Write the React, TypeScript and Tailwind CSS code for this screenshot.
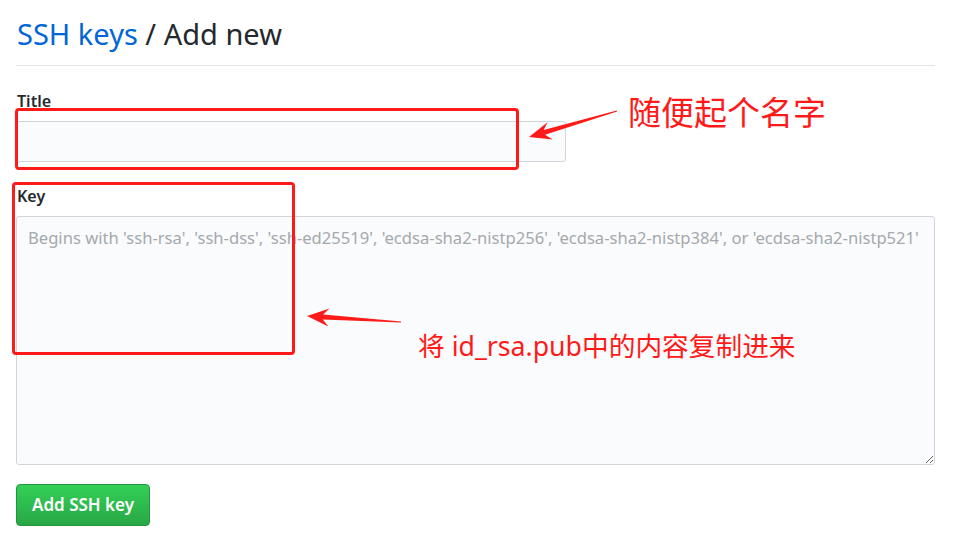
import React from 'react';

const sans = "font-['Segoe_UI','Noto_Sans','Noto_Sans_CJK_SC',sans-serif]";

function Arrow({ x1, y1, x2, y2 }: { x1: number; y1: number; x2: number; y2: number }) {
  // arrow drawn from tail (x1,y1) to head (x2,y2)
  const dx = x2 - x1;
  const dy = y2 - y1;
  const len = Math.sqrt(dx * dx + dy * dy);
  const ux = dx / len;
  const uy = dy / len;
  const px = -uy;
  const py = ux;
  const headLen = 22;
  const headW = 9;
  const bx = x2 - ux * headLen;
  const by = y2 - uy * headLen;
  const nx = x2 - ux * (headLen - 6);
  const ny = y2 - uy * (headLen - 6);
  const pts = [
    [x1 + px * 0.6, y1 + py * 0.6],
    [nx + px * 2.5, ny + py * 2.5],
    [bx + px * headW, by + py * headW],
    [x2, y2],
    [bx - px * headW, by - py * headW],
    [nx - px * 2.5, ny - py * 2.5],
    [x1 - px * 0.6, y1 - py * 0.6],
  ]
    .map((p) => p.join(','))
    .join(' ');
  return <polygon points={pts} fill="#ff1a1a" />;
}

export default function App() {
  return (
    <div className={`relative w-[969px] h-[553px] bg-white overflow-hidden ${sans}`}>
      <div className="flex flex-col items-start pl-4 pr-[34px] pt-[14px]">
        <h2 className="self-stretch text-[29px] leading-[40px] text-[#24292e] pb-[11px] border-b border-[#e1e4e8] pl-[1px]">
          <span className="text-[#0366d6]">SSH keys</span> / Add new
        </h2>

        <div className="flex flex-col gap-2 mt-[23px]">
          <label className="text-[16px] font-semibold text-[#24292e] leading-[24px] pl-[1px]">Title</label>
          <input
            type="text"
            className="w-[550px] h-[41px] bg-[#fafbfc] border border-[#d1d5da] rounded-[3px] outline-none"
          />
        </div>

        <div className="flex flex-col gap-2 mt-[22px] self-stretch">
          <label className="text-[16px] font-semibold text-[#24292e] leading-[24px] pl-[1px]">Key</label>
          <textarea
            placeholder="Begins with 'ssh-rsa', 'ssh-dss', 'ssh-ed25519', 'ecdsa-sha2-nistp256', 'ecdsa-sha2-nistp384', or 'ecdsa-sha2-nistp521'"
            className="w-[919px] h-[249px] bg-[#fafbfc] border border-[#d1d5da] rounded-[3px] px-[11px] py-[9px] text-[16.6px] leading-[24px] placeholder:text-[#a4a9ae] outline-none"
          />
        </div>

        <button className="mt-[19px] h-[42px] px-[15px] rounded-[4px] border border-[#22943d] bg-gradient-to-b from-[#34d058] to-[#28a745] text-white text-[17px] font-semibold">
          Add SSH key
        </button>
      </div>

      {/* red annotations */}
      <div className="absolute left-[15px] top-[108px] w-[504px] h-[62px] border-[3px] border-[#ff1a1a] rounded-[4px]" />
      <div className="absolute left-[12px] top-[182px] w-[283px] h-[173px] border-[3px] border-[#ff1a1a] rounded-[4px]" />
      <svg className="absolute left-0 top-0" width="969" height="553">
        <Arrow x1={617} y1={111} x2={529} y2={137} />
        <Arrow x1={401} y1={322} x2={307} y2={316} />
      </svg>
      <div className="absolute left-[628px] top-[89px] text-[33px] leading-[44px] text-[#ff1a1a] font-['Noto_Sans_CJK_SC',sans-serif]">
        随便起个名字
      </div>
      <div className="absolute left-[418px] top-[326px] text-[26.7px] leading-[40px] text-[#ff1a1a] font-['Noto_Sans','Noto_Sans_CJK_SC',sans-serif]">
        将 id_rsa.pub中的内容复制进来
      </div>
    </div>
  );
}
